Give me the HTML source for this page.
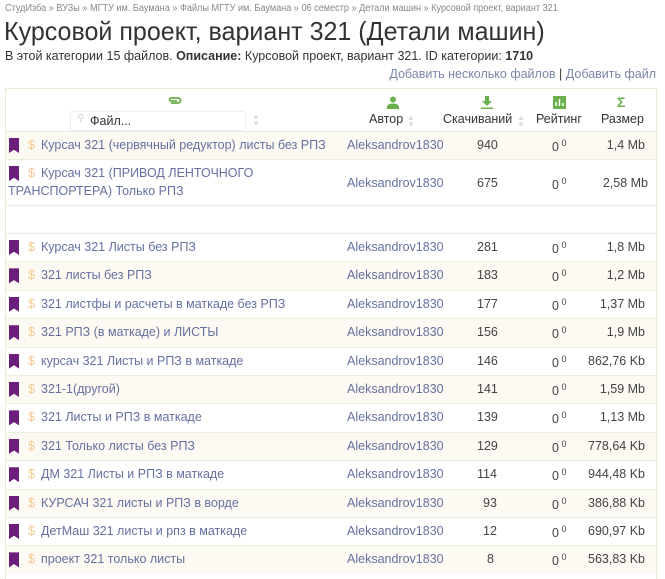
<!DOCTYPE html><html><head><meta charset="utf-8"><style>
body{margin:0;background:#fff;font-family:"Liberation Sans",sans-serif;color:#333;width:665px;height:571px;overflow:hidden;position:relative}
.bc{position:absolute;left:5px;top:3px;font-size:10px;color:#888;white-space:nowrap;transform:scaleX(0.913);transform-origin:left}
h1{position:absolute;left:4px;top:16px;margin:0;font-weight:normal;font-size:26px;color:#333;white-space:nowrap;transform:scaleX(0.963);transform-origin:left}
.desc{position:absolute;left:5px;top:49px;font-size:12.5px;white-space:nowrap}
.add{position:absolute;right:9px;top:67px;font-size:12.5px;color:#7a86a8;white-space:nowrap}
.tbl{position:absolute;left:5px;top:88px;width:650px;height:490px;border:1px solid #e4efd8;border-bottom:none}
.hd{position:absolute;left:0;top:0;width:650px;height:42px;background:#fff}
.row{position:absolute;left:0;width:650px;border-top:1px solid #e6f0dc;font-size:12.5px;color:#6670a0}
.row.o{background:#fdf9f3}
.row span{position:absolute}
.bm{position:absolute;left:3px;width:10px;height:15px;background:#6b1f7a;clip-path:polygon(0 0,100% 0,100% 100%,50% 78%,0 100%)}
.dol{color:#f5c890}
.n{color:#444}
.g{color:#6ab04c}
</style></head><body>
<div class="bc">СтудИзба » ВУЗы » МГТУ им. Баумана » Файлы МГТУ им. Баумана » 06 семестр » Детали машин » Курсовой проект, вариант 321</div>
<h1>Курсовой проект, вариант 321 (Детали машин)</h1>
<div class="desc">В этой категории 15 файлов. <b>Описание:</b> Курсовой проект, вариант 321. ID категории: <b>1710</b></div>
<div class="add">Добавить несколько файлов <span style="color:#333">|</span> Добавить файл</div>
<div class="tbl">
<div class="hd">
<svg style="position:absolute;left:162px;top:7px" width="14" height="10" viewBox="0 0 14 10"><path d="M3 7h7a2.5 2.5 0 0 0 0-5H3a1.5 1.5 0 0 0 0 3h6" fill="none" stroke="#6ab04c" stroke-width="1.8"/></svg>
<div style="position:absolute;left:64px;top:22px;width:174px;height:18px;border:1px solid #eee;border-radius:3px;font-size:12.5px;color:#333"><span style="position:absolute;left:6px;top:1px;color:#ccc;font-size:10px">&#9906;</span><span style="position:absolute;left:19px;top:2px">Файл...</span></div>
<span style="position:absolute;left:246px;top:24px;color:#ddd;font-size:8px;line-height:7px">▲<br>▼</span>
<svg style="position:absolute;left:381px;top:7px" width="12" height="13" viewBox="0 0 12 13"><circle cx="6" cy="3.5" r="3" fill="#6ab04c"/><path d="M0 13v-2c0-2 2-3.5 6-3.5s6 1.5 6 3.5v2z" fill="#6ab04c"/></svg>
<span style="position:absolute;left:363px;top:23px;font-size:12.5px">Автор</span><span style="position:absolute;left:401px;top:25px;color:#ddd;font-size:8px;line-height:7px">▲<br>▼</span>
<svg style="position:absolute;left:475px;top:7px" width="12" height="13" viewBox="0 0 12 13"><path d="M4 0h4v5h3l-5 5-5-5h3z M0 11.5h12v1.5H0z" fill="#6ab04c"/></svg>
<span style="position:absolute;left:437px;top:23px;font-size:12.5px">Скачиваний</span><span style="position:absolute;left:511px;top:25px;color:#ddd;font-size:8px;line-height:7px">▲<br>▼</span>
<svg style="position:absolute;left:547px;top:7px" width="13" height="13" viewBox="0 0 13 13"><rect width="13" height="13" fill="#6ab04c"/><path d="M3 10V6M6.5 10V3M10 10V7" stroke="#fff" stroke-width="1.5"/></svg>
<span style="position:absolute;left:530px;top:23px;font-size:12.5px">Рейтинг</span>
<span style="position:absolute;left:611px;top:5px;font-size:14px;font-weight:bold" class="g">Σ</span>
<span style="position:absolute;left:595px;top:23px;font-size:12.5px">Размер</span>
</div>
<div class="row o" style="top:42px;height:28px"><div class="bm" style="top:6px"></div><span style="left:22px;top:6px"><span class="dol">$</span></span><span style="left:35px;top:6px">Курсач 321 (червячный редуктор) листы без РПЗ</span><span style="left:341px;top:6px">Aleksandrov1830</span><span class="n" style="left:471px;top:6px">940</span><span class="n" style="left:546px;top:6px">0<sup style="font-size:9px"> 0</sup></span><span class="n" style="right:11px;top:6px">1,4 Mb</span></div>
<div class="row" style="top:70px;height:45px"><div class="bm" style="top:6px"></div><span style="left:22px;top:6px"><span class="dol">$</span></span><span style="left:35px;top:6px">Курсач 321 (ПРИВОД ЛЕНТОЧНОГО</span><span style="left:2px;top:24px">ТРАНСПОРТЕРА) Только РПЗ</span><span style="left:341px;top:16px">Aleksandrov1830</span><span class="n" style="left:471px;top:16px">675</span><span class="n" style="left:546px;top:16px">0<sup style="font-size:9px"> 0</sup></span><span class="n" style="right:8px;top:16px">2,58 Mb</span></div>
<div class="row" style="top:116px;height:28px;background:#fff"></div>
</div>
<div id="rows"></div>
<script>
var d=[["Курсач 321 Листы без РПЗ",281,"1,8 Mb"],["321 листы без РПЗ",183,"1,2 Mb"],["321 листфы и расчеты в маткаде без РПЗ",177,"1,37 Mb"],["321 РПЗ (в маткаде) и ЛИСТЫ",156,"1,9 Mb"],["курсач 321 Листы и РПЗ в маткаде",146,"862,76 Kb"],["321-1(другой)",141,"1,59 Mb"],["321 Листы и РПЗ в маткаде",139,"1,13 Mb"],["321 Только листы без РПЗ",129,"778,64 Kb"],["ДМ 321 Листы и РПЗ в маткаде",114,"944,48 Kb"],["КУРСАЧ 321 листы и РПЗ в ворде",93,"386,88 Kb"],["ДетМаш 321 листы и рпз в маткаде",12,"690,97 Kb"],["проект 321 только листы",8,"563,83 Kb"]];
var h="";d.forEach(function(r,i){var t=233+i*28.4;h+='<div class="row'+(i%2?' o':'')+'" style="left:6px;top:'+t+'px;height:28px;position:absolute;width:650px"><div class="bm" style="top:6px"></div><span style="left:22px;top:6px"><span class="dol">$</span></span><span style="left:35px;top:6px">'+r[0]+'</span><span style="left:341px;top:6px">Aleksandrov1830</span><span class="n" style="left:'+(r[1]<100?(r[1]<10?481:477):471)+'px;top:6px">'+r[1]+'</span><span class="n" style="left:546px;top:6px">0<sup style="font-size:9px"> 0</sup></span><span class="n" style="right:11px;top:6px">'+r[2]+'</span></div>';});
document.getElementById("rows").innerHTML=h;
</script>
<div style="position:absolute;left:5px;top:88px;width:1px;height:490px;background:#e4efd8"></div>
<div style="position:absolute;left:656px;top:88px;width:1px;height:490px;background:#e4efd8"></div>
</body></html>
